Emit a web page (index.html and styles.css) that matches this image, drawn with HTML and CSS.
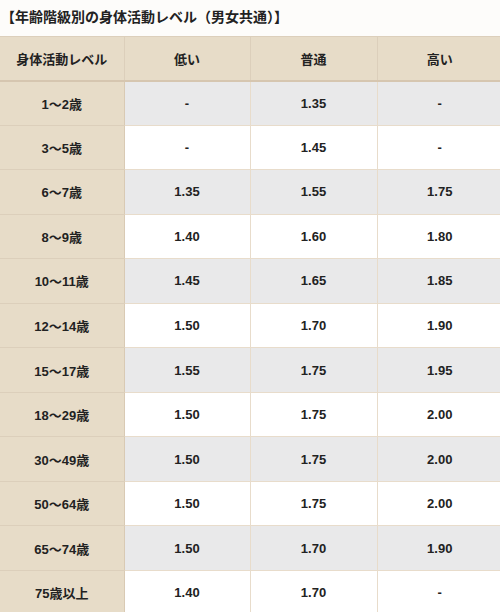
FILE: index.html
```html
<!DOCTYPE html>
<html lang="ja">
<head>
<meta charset="utf-8">
<link rel="stylesheet" href="styles.css">
</head>
<body>
<p class="title">【年齢階級別の身体活動レベル（男女共通）】</p>
<table class="pal">
<thead>
<tr><th>身体活動レベル</th><th>低い</th><th>普通</th><th>高い</th></tr>
</thead>
<tbody>
<tr class="g"><th>1～2歳</th><td>-</td><td>1.35</td><td>-</td></tr>
<tr><th>3～5歳</th><td>-</td><td>1.45</td><td>-</td></tr>
<tr class="g"><th>6～7歳</th><td>1.35</td><td>1.55</td><td>1.75</td></tr>
<tr><th>8～9歳</th><td>1.40</td><td>1.60</td><td>1.80</td></tr>
<tr class="g"><th>10～11歳</th><td>1.45</td><td>1.65</td><td>1.85</td></tr>
<tr><th>12～14歳</th><td>1.50</td><td>1.70</td><td>1.90</td></tr>
<tr class="g"><th>15～17歳</th><td>1.55</td><td>1.75</td><td>1.95</td></tr>
<tr><th>18～29歳</th><td>1.50</td><td>1.75</td><td>2.00</td></tr>
<tr class="g"><th>30～49歳</th><td>1.50</td><td>1.75</td><td>2.00</td></tr>
<tr><th>50～64歳</th><td>1.50</td><td>1.75</td><td>2.00</td></tr>
<tr class="g"><th>65～74歳</th><td>1.50</td><td>1.70</td><td>1.90</td></tr>
<tr><th>75歳以上</th><td>1.40</td><td>1.70</td><td>-</td></tr>
</tbody>
</table>
</body>
</html>
```
FILE: styles.css
```css
html, body {
  margin: 0;
  padding: 0;
  background: #fdfcfa;
  overflow: hidden;
}
body {
  width: 500px;
  font-family: "Liberation Sans", "Noto Sans CJK JP", sans-serif;
  color: #222;
}
.title {
  margin: 0;
  padding: 6px 0 0 1px;
  height: 30px;
  box-sizing: border-box;
  font-family: "Noto Sans CJK JP", sans-serif;
  font-weight: bold;
  font-size: 14px;
  line-height: 20px;
  color: #222;
}
.pal {
  border-collapse: collapse;
  table-layout: fixed;
  width: 503px;
  margin-top: 6px;
}
.pal th, .pal td {
  height: 44.55px;
  padding: 0;
  text-align: center;
  vertical-align: middle;
  font-weight: bold;
  font-size: 13px;
  border: 1px solid #e8dccb;
  box-sizing: border-box;
}
.pal th {
  font-family: "Noto Sans CJK JP", sans-serif;
  background: #e7dcc8;
  border-color: #dccfbb;
}
.pal tbody th {
  border-right: 1px solid #d9cab4;
  font-family: "Liberation Sans", "Noto Sans CJK JP", sans-serif;
}
.pal thead th {
  height: 44px;
  border-top: 1px solid #dccfbb;
  border-bottom: 2px solid #d6c6b0;
}
.pal th:first-child { width: 124px; border-left: 0; }
.pal th:nth-child(2) { width: 126px; }
.pal th:nth-child(3) { width: 127px; }
.pal td { background: #fff; }
.pal tr.g td { background: #e9e9ea; }
```
